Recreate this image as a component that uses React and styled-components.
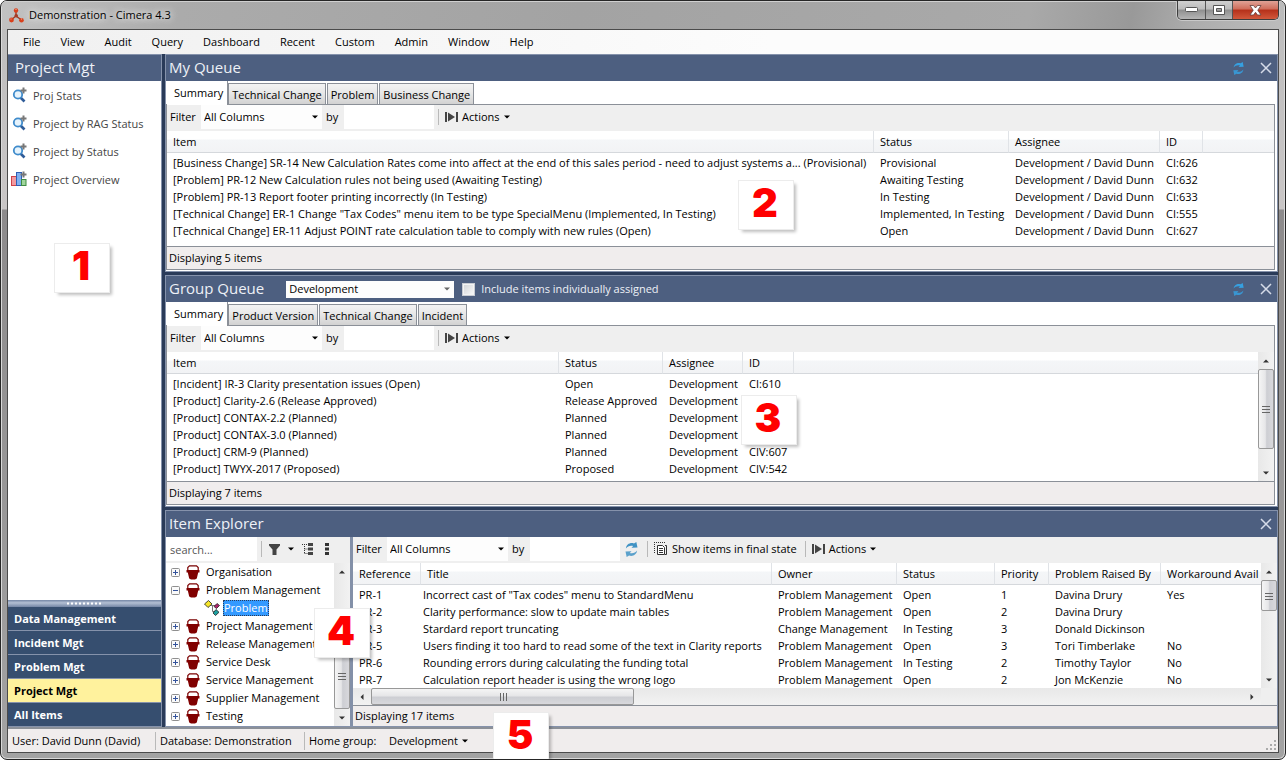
import React, { useState } from 'react';
import styled, { createGlobalStyle, css } from 'styled-components';

const color = {
  header: '#4d5f80',
  navy: '#2a3b59',
  nav: '#364e6f',
  active: '#fff29d',
  edge: '#8592ab',
  frame: '#8b9098',
  bar: '#efefef',
  status: '#f0eded',
  line: '#d5d8dc',
};

const GlobalStyle = createGlobalStyle`
  * { box-sizing: border-box; }
  body {
    margin: 0;
    background: #fff;
    color: #000;
    font: 11px/16px 'Open Sans', 'Noto Sans', sans-serif;
    overflow: hidden;
  }
  button, input, select { font: inherit; color: inherit; margin: 0; padding: 0; border: 0; background: none; border-radius: 0; }
  svg { display: block; flex: none; }
`;

const Window = styled.div`
  height: 100vh;
  display: flex;
  flex-direction: column;
  padding: 0 6px 6px;
  border: 1px solid #262626;
  border-radius: 7px;
  box-shadow: inset 0 0 0 1px #d9d9d9;
  background: linear-gradient(#bdbdbd 0, #c9c6c6 208px, #8d8b8c 209px, #a3a3a3 100%);
  overflow: hidden;
`;

const TitleBar = styled.header`
  flex: none;
  height: 28px;
  margin: 0 -5px;
  padding: 0 5px 0 7px;
  display: flex;
  align-items: center;
  gap: 5px;
  box-shadow: inset 0 1px 0 #d0d0d0;
  background: linear-gradient(100deg, #c2c2c2 0%, #ababab 14%, #a3a3a3 45%, #a9a9a9 80%, #999 88%, #adadad 93%, #bcbcbc 100%);
`;

const Title = styled.h1`
  flex: 1;
  margin: 0;
  font-size: 11px;
  font-weight: 400;
  color: #000;
  text-shadow: 0 0 6px #fff, 0 0 10px #e8e8e8;
`;

const WindowButtons = styled.div`
  align-self: flex-start;
  display: flex;
  height: 19px;
  border: 1px solid #3d3d3d;
  border-top: 0;
  border-radius: 0 0 5px 5px;
  overflow: hidden;
  box-shadow: 0 0 0 1px #c9c9c9;
`;

const WindowButton = styled.button`
  width: ${p => (p.$close ? 46 : 27)}px;
  display: grid;
  place-items: center;
  border-left: ${p => (p.$first ? 0 : '1px solid #555')};
  background: ${p => (p.$close
    ? 'linear-gradient(#e0a296 0, #cf6d5a 45%, #b5301a 50%, #d2583b 100%)'
    : 'linear-gradient(#d0d0d0 0, #bbb 45%, #8f8f8f 50%, #b5b5b5 100%)')};
`;

const Client = styled.div`
  flex: 1;
  min-height: 0;
  display: flex;
  flex-direction: column;
  border: 1px solid #4b4b4b;
`;

const MenuBar = styled.nav`
  flex: none;
  height: 24px;
  display: flex;
  align-items: center;
  gap: 20px;
  padding: 0 15px;
  background: linear-gradient(90deg, #f0f0f0, #fcfcfc 60%);
`;

const MenuItem = styled.button`
  font-size: 11px;
  line-height: 16px;
`;

const Workspace = styled.div`
  flex: 1;
  min-height: 0;
  display: flex;
  gap: 3px;
  background: ${color.navy};
`;

const Sidebar = styled.aside`
  position: relative;
  flex: none;
  width: 154px;
  display: flex;
  flex-direction: column;
  border-top: 1px solid ${color.edge};
  border-right: 1px solid ${color.edge};
  background: #fff;
`;

const PanelHeader = styled.div`
  flex: none;
  height: 26px;
  display: flex;
  align-items: center;
  padding: 0 5px 0 ${p => (p.$indent ? 7 : 3)}px;
  background: ${color.header};
  color: #eef1f7;
`;

const PanelTitle = styled.h2`
  margin: 0;
  padding-bottom: 2px;
  font-size: 15px;
  line-height: 24px;
  font-weight: 400;
`;

const Shortcuts = styled.ul`
  flex: 1;
  margin: 0;
  padding: 1px 0;
  list-style: none;
`;

const Shortcut = styled.a`
  display: flex;
  align-items: center;
  gap: 2px;
  height: 28px;
  padding-left: 3px;
  color: #444;
  text-decoration: none;
`;

const Splitter = styled.div`
  flex: none;
  height: 7px;
  display: grid;
  place-items: center;
  background: linear-gradient(#7486a5, #b3bfd3 40%, #7486a5);
`;

const Sections = styled.div`
  flex: none;
  display: flex;
  flex-direction: column;
`;

const SectionButton = styled.button`
  height: 24px;
  padding: 0 6px;
  text-align: left;
  font-weight: 700;
  border-bottom: 1px solid ${color.edge};
  background: ${p => (p.$active ? color.active : color.nav)};
  color: ${p => (p.$active ? '#000' : '#fff')};
`;

const Main = styled.main`
  flex: 1;
  min-width: 0;
  display: flex;
  flex-direction: column;
  gap: 3px;
`;

const Panel = styled.section`
  position: relative;
  min-height: 0;
  flex: ${p => (p.$grow ? '1' : 'none')};
  display: flex;
  flex-direction: column;
  border: 1px solid ${color.edge};
  background: #fff;
`;

const HeaderTools = styled.div`
  margin-left: auto;
  display: flex;
  align-items: center;
  gap: 15px;
`;

const IconButton = styled.button`
  display: grid;
  place-items: center;
`;

const Tabs = styled.div`
  height: 23px;
  display: flex;
  align-items: flex-end;
  gap: 1px;
  padding-left: 1px;
`;

const Tab = styled.button`
  height: 21px;
  padding: 2px 3px 0;
  border: 1px solid ${color.frame};
  border-bottom: 0;
  background: linear-gradient(#f3f3f3, #e8e8e8 45%, #d2d2d2);
  ${p => p.$active && css`
    height: 24px;
    margin: 0 -1px -1px 0;
    padding: 0 4px 0 7px;
    border-width: 0 1px 0 0;
    background: #fff;
    z-index: 1;
  `}
`;

const Frame = styled.div`
  display: flex;
  flex-direction: column;
  margin: 0 2px 1px 0;
  border: 1px solid ${color.frame};
`;

const Toolbar = styled.div`
  flex: none;
  height: 26px;
  display: flex;
  align-items: center;
  padding: 0 0 2px ${p => (p.$flush ? 0 : 3)}px;
  background: ${color.bar};
  white-space: nowrap;
`;

const FilterLabel = styled.label`
  width: ${p => (p.$by ? 22 : 31)}px;
  padding-left: ${p => (p.$by ? 4 : 0)}px;
`;

const SelectBox = styled.span`
  position: relative;
  display: flex;
  align-items: center;
  width: ${p => p.$width}px;
  height: ${p => p.$height}px;
  color: #000;
  background: #fdfdfd;

  select {
    appearance: none;
    width: 100%;
    height: 100%;
    padding-left: 3px;
    outline: 0;
  }

  svg {
    position: absolute;
    right: 4px;
    pointer-events: none;
  }
`;

const TextBox = styled.input`
  width: ${p => p.$width}px;
  height: 24px;
  background: #fff;
  outline: 0;
  padding: 0 4px;

  &::placeholder { color: #555; opacity: 1; }
`;

const Divider = styled.span`
  width: 1px;
  height: 16px;
  margin: 0 6px 0 4px;
  background: #b9b9b9;
`;

const ToolButton = styled.button`
  display: flex;
  align-items: center;
  gap: 4px;
`;

const FilterButton = styled(ToolButton)`
  gap: 8px;
  margin-left: 1px;
`;

const FinalStateButton = styled(ToolButton)`
  margin-right: 4px;
`;

const TreeTools = styled.div`
  display: flex;
  align-items: center;
  gap: 12px;
  margin-left: 8px;
`;

const RefreshButton = styled(IconButton)`
  margin: 0 4px;
`;

const TableArea = styled.div`
  height: ${p => (p.$height ? `${p.$height}px` : 'auto')};
  flex: ${p => (p.$height ? 'none' : '1')};
  min-height: 0;
  display: flex;
  background: #fff;
`;

const TableClip = styled.div`
  flex: 1;
  min-width: 0;
  overflow: hidden;
`;

const Table = styled.table`
  width: 100%;
  table-layout: fixed;
  border-spacing: 0;
  color: #000;

  th, td {
    padding: 0 0 0 6px;
    text-align: left;
    font-weight: 400;
    white-space: nowrap;
    overflow: hidden;
  }

  th {
    height: 22px;
    border-right: 1px solid #e0e3e7;
    border-bottom: 1px solid ${color.line};
    background: linear-gradient(#fff 8px, #f4f6f8 9px, #f2f3f5);
  }

  th:last-child { border-right: 0; }

  td { height: 17px; line-height: 17px; }

  ${p => p.$titled && css`
    td:nth-child(2) { padding-left: 2px; }
  `}

  tbody::before {
    content: '';
    display: block;
    height: 1px;
  }
`;

const ColumnWidth = styled.col`
  width: ${p => (p.$width ? `${p.$width}px` : 'auto')};
`;

const CountBar = styled.div`
  flex: none;
  height: ${p => (p.$short ? 21 : 23)}px;
  display: flex;
  align-items: center;
  padding-left: 2px;
  border-top: 1px solid ${color.frame};
  background: ${color.status};
`;

const ScrollTrack = styled.div`
  flex: none;
  display: flex;
  flex-direction: ${p => (p.$across ? 'row' : 'column')};
  width: ${p => (p.$across ? 'auto' : '16px')};
  height: ${p => (p.$across ? '17px' : 'auto')};
  margin-right: ${p => (p.$across ? 16 : 0)}px;
  background: linear-gradient(${p => (p.$across ? '180deg' : '90deg')}, #e8e8e8, #f2f2f2);
`;

const ScrollArrow = styled.button`
  flex: none;
  width: ${p => (p.$across ? 18 : 16)}px;
  height: 17px;
  display: grid;
  place-items: center;
`;

const ScrollSpace = styled.div`
  flex: ${p => p.$grow} 1 0;
`;

const ScrollThumb = styled.div`
  flex: ${p => p.$grow} 1 0;
  display: grid;
  place-items: center;
  border: 1px solid #989898;
  border-radius: 2px;
  background: linear-gradient(${p => (p.$across ? '180deg' : '90deg')}, #f5f5f5, #e6e6e8 45%, #cdced3 55%, #d8d8dc);
`;

const GroupSelect = styled.div`
  margin: 0 8px 0 22px;
`;

const CheckLabel = styled.label`
  display: flex;
  align-items: center;
  gap: 6px;

  input {
    appearance: none;
    width: 13px;
    height: 13px;
    border: 1px solid #c8ccd3;
    background: linear-gradient(135deg, #cfd2d6, #fafafa);
    box-shadow: inset 0 0 0 1px #f3f3f3;
  }

  input:checked { background: #3399ff; }
`;

const Explorer = styled.div`
  flex: 1;
  min-height: 0;
  display: flex;
`;

const TreePane = styled.div`
  flex: none;
  width: 187px;
  display: flex;
  flex-direction: column;
  border-right: 3px solid #8390a8;
`;

const TreeArea = styled.div`
  flex: 1;
  min-height: 0;
  display: flex;
`;

const Tree = styled.ul`
  flex: 1;
  min-width: 0;
  margin: 0;
  padding: 0;
  list-style: none;
  overflow: hidden;
`;

const TreeRow = styled.li`
  height: 18px;
  display: flex;
  align-items: center;
  padding-left: ${p => (p.$nested ? 38 : 5)}px;
  gap: ${p => (p.$nested ? 3 : 6)}px;
  white-space: nowrap;
`;

const TreeText = styled.span`
  line-height: 16px;
  ${p => p.$selected && css`
    padding: 0 1px;
    color: #fff;
    background: #3399ff;
    outline: 1px dotted #2a3b59;
    outline-offset: -1px;
  `}
`;

const Results = styled.div`
  flex: 1;
  min-width: 0;
  display: flex;
  flex-direction: column;
  background: ${color.bar};
`;

const StatusBar = styled.footer`
  position: relative;
  flex: none;
  height: 25px;
  display: flex;
  align-items: center;
  padding-left: 4px;
  border-top: 2px solid ${color.frame};
  background: ${color.status};
`;

const StatusText = styled.span`
  width: ${p => p.$width}px;
  white-space: nowrap;
`;

const StatusDivider = styled(Divider)`
  height: 18px;
  margin: 0 4px 0 0;
`;

const Grip = styled.span`
  margin-left: auto;
  align-self: flex-end;
`;

const Callout = styled.div`
  position: absolute;
  z-index: 5;
  left: ${p => p.$x}px;
  top: ${p => p.$y}px;
  width: 54px;
  height: 48px;
  display: grid;
  place-items: center;
  padding: 0 2px 4px 0;
  background: #fff;
  box-shadow: 0 0 0 1px #ececec, 3px 3px 3px rgba(0, 0, 0, 0.25);
  color: #f00;
  font: 900 40px/40px Inter, 'Liberation Sans', sans-serif;
`;

const Logo = () => (
  <svg width="15" height="15" viewBox="0 0 15 15">
    <path d="M7 3v5L2 12M7 8l5.500 4" fill="none" stroke="#9c3a22" strokeWidth="1.400" />
    <circle cx="7" cy="2.500" r="2.200" fill="#d8401c" />
    <circle cx="7.200" cy="7.800" r="1.800" fill="#a83a24" />
    <circle cx="2.500" cy="12" r="2.400" fill="#d8401c" />
    <circle cx="12.500" cy="12.200" r="2.300" fill="#d8401c" />
    <path d="M6.500 1.500h1M1.500 11h1M12 11h1" stroke="#f6b19c" />
  </svg>
);

const SearchPlus = () => (
  <svg width="20" height="18" viewBox="0 0 20 18">
    <path d="M9.500 10.500l4 4" stroke="#2f5c98" strokeWidth="2.600" />
    <circle cx="7" cy="7.500" r="4.200" fill="#e6f3fc" stroke="#3f8bcb" strokeWidth="1.800" />
    <path d="M12.500 .5v6M9.500 3.500h6" stroke="#777" strokeWidth="2" />
  </svg>
);

const ChartPlus = () => (
  <svg width="20" height="18" viewBox="0 0 20 18">
    <rect x="0.500" y="5.500" width="5" height="9" fill="#f29a9f" stroke="#cf4247" />
    <rect x="5.500" y="1.500" width="5" height="13" fill="#7fb0f0" stroke="#2f5fb4" />
    <rect x="10.500" y="8.500" width="4.500" height="6" fill="#9fd59c" stroke="#3f8b43" />
    <path d="M12.500 .5v6M9.500 3.500h6" stroke="#777" strokeWidth="2" />
  </svg>
);

const Refresh = ({ size = 13, fill = '#36a0e0' }) => (
  <svg width={size} height={size} viewBox="0 0 14 14" fill={fill}>
    <path d="M1.800 6C2 2.500 5.500 .2 9.300 1.300L11.500 0 12.600 5.200 7 5.400 8.600 3.800C6 3 3.500 3.800 1.800 6z" />
    <path d="M12.200 8C12 11.500 8.500 13.800 4.700 12.700L2.500 14 1.400 8.800 7 8.600 5.400 10.200C8 11 10.500 10.200 12.200 8z" opacity="0.85" />
  </svg>
);

const Cross = () => (
  <svg width="12" height="12" viewBox="0 0 12 12">
    <path d="M1 1l10 10M11 1L1 11" stroke="#d5dbe8" strokeWidth="1.500" />
  </svg>
);

const Arrow = ({ turn = 0, tone = '#000', size = 6 }) => (
  <svg width={size} height={size} viewBox="0 0 6 6">
    <path d="M0 1.500h6L3 4.500z" fill={tone} transform={`rotate(${turn} 3 3)`} />
  </svg>
);

const ActionIcon = () => (
  <svg width="13" height="10" viewBox="0 0 13 10">
    <path d="M0 0h2v10H0zM11 0h2v10h-2z" fill="#444" />
    <path d="M3 .5L10 5 3 9.500z" fill="#444" />
  </svg>
);

const FinalState = () => (
  <svg width="14" height="14" viewBox="0 0 14 14" fill="none" stroke="#333">
    <path d="M0 .5h11M.5 0v11" strokeDasharray="1 1" />
    <path d="M3.500 3.500h5l2 2v7h-7z" fill="#fff" />
    <path d="M5 6.500h4M5 8.500h4M5 10.500h4M11 3.500h1.500v9H11" />
  </svg>
);

const Funnel = () => (
  <svg width="11" height="11" viewBox="0 0 11 11">
    <path d="M0 0h11v1.500L7.500 5.500V11H3.500V5.500L0 1.500z" fill="#444" />
  </svg>
);

const TreeIcon = () => (
  <svg width="11" height="12" viewBox="0 0 11 12">
    <path d="M0 1.500h6M2.500 1v9.500M2.500 6H6M2.500 10.500H6" fill="none" stroke="#333" strokeDasharray="1 1" />
    <path d="M6 0h5v3H6zM6 4.500h5v3H6zM6 9h5v3H6z" fill="#444" />
  </svg>
);

const Dots = () => (
  <svg width="4" height="12" viewBox="0 0 4 12">
    <path d="M0 0h4v3H0zM0 4.500h4v3H0zM0 9h4v3H0z" fill="#333" />
  </svg>
);

const Bucket = () => (
  <svg width="14" height="15" viewBox="0 0 14 15">
    <path d="M1.800 6V2.500L3.500 .8h7l1.700 1.700V6" fill="#fff" stroke="#7a0000" strokeWidth="1.200" />
    <path d="M.500 5h13v2.500h-1.300L10.800 13.500 9 14.500H5L3.200 13.500 1.800 7.500H.5z" fill="#800000" />
  </svg>
);

const Expander = ({ open }) => (
  <svg width="9" height="9" viewBox="0 0 9 9">
    <rect x="0.500" y="0.500" width="8" height="8" rx="1" fill="#fafafa" stroke="#8f8f8f" />
    <path d={open ? 'M2 4.500h5' : 'M2 4.500h5M4.500 2v5'} stroke="#34539c" />
  </svg>
);

const NodeIcon = () => (
  <svg width="16" height="16" viewBox="0 0 16 16">
    <path d="M6 5.500h6M8.500 5.500v6h3" fill="none" stroke="#777" />
    <path d="M4.500 .5L8 4 4 7.500 .5 4z" fill="#f5e52a" stroke="#222" strokeWidth="0.800" />
    <path d="M13 3.500l2.500 2-3 3-2.500-2z" fill="#b0226c" stroke="#222" strokeWidth="0.800" />
    <path d="M12 9.500l3 2.800L11.500 15.500l-2.500-2.500z" fill="#1ca0a0" stroke="#222" strokeWidth="0.800" />
  </svg>
);

const Ridges = ({ across }) => (
  <svg width="8" height="8" viewBox="0 0 8 8">
    <path
      d={across ? 'M1.500 0v8M4.500 0v8M7.500 0v8' : 'M0 1.500h8M0 4.500h8M0 7.500h8'}
      stroke="#666"
    />
  </svg>
);

const GripDots = () => (
  <svg width="12" height="12" viewBox="0 0 12 12" fill="#aaa">
    <path d="M8 0h2v2H8zM4 4h2v2H4zM8 4h2v2H8zM0 8h2v2H0zM4 8h2v2H4zM8 8h2v2H8z" />
  </svg>
);

const SplitterDots = () => (
  <svg width="36" height="3" viewBox="0 0 36 3">
    <path d="M0 1.500h36" stroke="#fff" strokeWidth="2" strokeDasharray="2 2" />
  </svg>
);

const Scrollbar = ({ across, before, thumb, after }) => (
  <ScrollTrack $across={across}>
    <ScrollArrow $across={across} aria-label={across ? 'Scroll left' : 'Scroll up'}>
      <Arrow turn={across ? 90 : 180} tone="#333" />
    </ScrollArrow>
    <ScrollSpace $grow={before} />
    <ScrollThumb $across={across} $grow={thumb}><Ridges across={across} /></ScrollThumb>
    <ScrollSpace $grow={after} />
    <ScrollArrow $across={across} aria-label={across ? 'Scroll right' : 'Scroll down'}>
      <Arrow turn={across ? -90 : 0} tone="#333" />
    </ScrollArrow>
  </ScrollTrack>
);

const Grid = ({ columns, rows, titled }) => (
  <TableClip>
    <Table $titled={titled}>
      <colgroup>
        {columns.map(([name, width]) => <ColumnWidth key={name} $width={width} />)}
      </colgroup>
      <thead>
        <tr>{columns.map(([name]) => <th key={name} scope="col">{name}</th>)}</tr>
      </thead>
      <tbody>
        {rows.map(row => (
          <tr key={row[0]}>
            {columns.map(([name], i) => <td key={name}>{row[i]}</td>)}
          </tr>
        ))}
      </tbody>
    </Table>
  </TableClip>
);

const FilterBar = ({ id, extra }) => (
  <Toolbar>
    <FilterLabel htmlFor={`${id}-column`}>Filter</FilterLabel>
    <SelectBox $width={121} $height={24}>
      <select id={`${id}-column`}><option>All Columns</option></select>
      <Arrow />
    </SelectBox>
    <FilterLabel $by htmlFor={`${id}-text`}>by</FilterLabel>
    <TextBox id={`${id}-text`} $width={90} />
    {extra}
    <Divider />
    <ToolButton><ActionIcon />Actions<Arrow /></ToolButton>
  </Toolbar>
);

const TabStrip = ({ names }) => {
  const [current, setCurrent] = useState(names[0]);
  return (
    <Tabs role="tablist">
      {names.map(name => (
        <Tab
          key={name}
          role="tab"
          aria-selected={name === current}
          $active={name === current}
          onClick={() => setCurrent(name)}
        >
          {name}
        </Tab>
      ))}
    </Tabs>
  );
};

const menus = ['File', 'View', 'Audit', 'Query', 'Dashboard', 'Recent', 'Custom', 'Admin', 'Window', 'Help'];
const shortcuts = ['Proj Stats', 'Project by RAG Status', 'Project by Status', 'Project Overview'];
const sections = ['Data Management', 'Incident Mgt', 'Problem Mgt', 'Project Mgt', 'All Items'];

const myColumns = [['Item', 707], ['Status', 135], ['Assignee', 151], ['ID', 43], ['']];
const myRows = [
  ['[Business Change] SR-14 New Calculation Rates come into affect at the end of this sales period - need to adjust systems a... (Provisional)', 'Provisional', 'Development / David Dunn', 'CI:626'],
  ['[Problem] PR-12 New Calculation rules not being used (Awaiting Testing)', 'Awaiting Testing', 'Development / David Dunn', 'CI:632'],
  ['[Problem] PR-13 Report footer printing incorrectly (In Testing)', 'In Testing', 'Development / David Dunn', 'CI:633'],
  ['[Technical Change] ER-1 Change "Tax Codes" menu item to be type SpecialMenu (Implemented, In Testing)', 'Implemented, In Testing', 'Development / David Dunn', 'CI:555'],
  ['[Technical Change] ER-11 Adjust POINT rate calculation table to comply with new rules (Open)', 'Open', 'Development / David Dunn', 'CI:627'],
];

const groupColumns = [['Item', 392], ['Status', 104], ['Assignee', 80], ['ID', 51], ['']];
const groupRows = [
  ['[Incident] IR-3 Clarity presentation issues (Open)', 'Open', 'Development', 'CI:610'],
  ['[Product] Clarity-2.6 (Release Approved)', 'Release Approved', 'Development', ''],
  ['[Product] CONTAX-2.2 (Planned)', 'Planned', 'Development', ''],
  ['[Product] CONTAX-3.0 (Planned)', 'Planned', 'Development', ''],
  ['[Product] CRM-9 (Planned)', 'Planned', 'Development', 'CIV:607'],
  ['[Product] TWYX-2017 (Proposed)', 'Proposed', 'Development', 'CIV:542'],
];

const problemColumns = [['Reference', 68], ['Title', 351], ['Owner', 125], ['Status', 98], ['Priority', 54], ['Problem Raised By', 112], ['Workaround Avail']];
const problemRows = [
  ['PR-1', 'Incorrect cast of "Tax codes" menu to StandardMenu', 'Problem Management', 'Open', '1', 'Davina Drury', 'Yes'],
  ['PR-2', 'Clarity performance: slow to update main tables', 'Problem Management', 'Open', '2', 'Davina Drury', ''],
  ['PR-3', 'Stardard report truncating', 'Change Management', 'In Testing', '3', 'Donald Dickinson', ''],
  ['PR-5', 'Users finding it too hard to read some of the text in Clarity reports', 'Problem Management', 'Open', '3', 'Tori Timberlake', 'No'],
  ['PR-6', 'Rounding errors during calculating the funding total', 'Problem Management', 'In Testing', '2', 'Timothy Taylor', 'No'],
  ['PR-7', 'Calculation report header is using the wrong logo', 'Problem Management', 'Open', '2', 'Jon McKenzie', 'No'],
];

const treeBefore = ['Organisation', 'Problem Management'];
const treeAfter = ['Project Management', 'Release Management', 'Service Desk', 'Service Management', 'Supplier Management', 'Testing'];

const Folder = ({ name, open }) => (
  <TreeRow>
    <Expander open={open} />
    <Bucket />
    <TreeText>{name}</TreeText>
  </TreeRow>
);

const App = () => {
  const [section, setSection] = useState('Project Mgt');

  return (
    <Window>
      <GlobalStyle />
      <TitleBar>
        <Logo />
        <Title>Demonstration - Cimera 4.3</Title>
        <WindowButtons>
          <WindowButton $first aria-label="Minimize">
            <svg width="13" height="6" viewBox="0 0 13 6"><rect x="0.500" y="0.500" width="12" height="4" rx="1" fill="#fff" stroke="#555" /></svg>
          </WindowButton>
          <WindowButton aria-label="Maximize">
            <svg width="13" height="11" viewBox="0 0 13 11"><path d="M.5.5h11v9H.5zM3.500 3.500v3h5v-3z" fill="#fff" stroke="#555" fillRule="evenodd" /></svg>
          </WindowButton>
          <WindowButton $close aria-label="Close">
            <svg width="13" height="11" viewBox="0 0 13 11"><path d="M1 .5h3.500l2 2.500 2-2.500H12L8.800 5.200 12 10H8.500l-2-2.700-2 2.700H1l3.200-4.800z" fill="#fff" stroke="#64403c" strokeWidth="0.800" /></svg>
          </WindowButton>
        </WindowButtons>
      </TitleBar>

      <Client>
        <MenuBar>
          {menus.map(name => <MenuItem key={name}>{name}</MenuItem>)}
        </MenuBar>

        <Workspace>
          <Sidebar>
            <PanelHeader $indent><PanelTitle>Project Mgt</PanelTitle></PanelHeader>
            <Shortcuts>
              {shortcuts.map(name => (
                <li key={name}>
                  <Shortcut href="#">
                    {name === 'Project Overview' ? <ChartPlus /> : <SearchPlus />}
                    {name}
                  </Shortcut>
                </li>
              ))}
            </Shortcuts>
            <Splitter><SplitterDots /></Splitter>
            <Sections>
              {sections.map(name => (
                <SectionButton key={name} $active={name === section} onClick={() => setSection(name)}>
                  {name}
                </SectionButton>
              ))}
            </Sections>
            <Callout $x={47} $y={189}>1</Callout>
          </Sidebar>

          <Main>
            <Panel>
              <PanelHeader>
                <PanelTitle>My Queue</PanelTitle>
                <HeaderTools>
                  <IconButton aria-label="Refresh"><Refresh /></IconButton>
                  <IconButton aria-label="Close"><Cross /></IconButton>
                </HeaderTools>
              </PanelHeader>
              <TabStrip names={['Summary', 'Technical Change', 'Problem', 'Business Change']} />
              <Frame>
                <FilterBar id="my" />
                <TableArea $height={115}>
                  <Grid columns={myColumns} rows={myRows} />
                </TableArea>
                <CountBar>Displaying 5 items</CountBar>
              </Frame>
              <Callout $x={573} $y={126}>2</Callout>
            </Panel>

            <Panel>
              <PanelHeader>
                <PanelTitle>Group Queue</PanelTitle>
                <GroupSelect>
                  <SelectBox $width={168} $height={17}>
                    <select aria-label="Group"><option>Development</option></select>
                    <Arrow tone="#666" />
                  </SelectBox>
                </GroupSelect>
                <CheckLabel><input type="checkbox" />Include items individually assigned</CheckLabel>
                <HeaderTools>
                  <IconButton aria-label="Refresh"><Refresh /></IconButton>
                  <IconButton aria-label="Close"><Cross /></IconButton>
                </HeaderTools>
              </PanelHeader>
              <TabStrip names={['Summary', 'Product Version', 'Technical Change', 'Incident']} />
              <Frame>
                <FilterBar id="group" />
                <TableArea $height={129}>
                  <Grid columns={groupColumns} rows={groupRows} />
                  <Scrollbar before={0} thumb={80} after={16} />
                </TableArea>
                <CountBar>Displaying 7 items</CountBar>
              </Frame>
              <Callout $x={576} $y={120}>3</Callout>
            </Panel>

            <Panel $grow>
              <PanelHeader>
                <PanelTitle>Item Explorer</PanelTitle>
                <HeaderTools>
                  <IconButton aria-label="Close"><Cross /></IconButton>
                </HeaderTools>
              </PanelHeader>
              <Explorer>
                <TreePane>
                  <Toolbar $flush>
                    <TextBox $width={91} placeholder="search..." aria-label="Search" />
                    <Divider />
                    <FilterButton aria-label="Filter"><Funnel /><Arrow /></FilterButton>
                    <TreeTools>
                      <IconButton aria-label="Expand tree"><TreeIcon /></IconButton>
                      <IconButton aria-label="More"><Dots /></IconButton>
                    </TreeTools>
                  </Toolbar>
                  <TreeArea>
                    <Tree>
                      {treeBefore.map(name => <Folder key={name} name={name} open={name === 'Problem Management'} />)}
                      <TreeRow $nested>
                        <NodeIcon />
                        <TreeText $selected>Problem</TreeText>
                      </TreeRow>
                      {treeAfter.map(name => <Folder key={name} name={name} />)}
                    </Tree>
                    <Scrollbar before={63} thumb={66} after={0} />
                  </TreeArea>
                </TreePane>
                <Results>
                  <FilterBar
                    id="explorer"
                    extra={(
                      <>
                        <RefreshButton aria-label="Refresh"><Refresh size={15} fill="#4193c4" /></RefreshButton>
                        <Divider />
                        <FinalStateButton><FinalState />Show items in final state</FinalStateButton>
                      </>
                    )}
                  />
                  <TableArea>
                    <Grid titled columns={problemColumns} rows={problemRows} />
                    <Scrollbar before={0} thumb={30} after={61} />
                  </TableArea>
                  <Scrollbar across before={0} thumb={262} after={610} />
                  <CountBar $short>Displaying 17 items</CountBar>
                </Results>
              </Explorer>
              <Callout $x={149} $y={98}>4</Callout>
            </Panel>
          </Main>
        </Workspace>

        <StatusBar>
          <StatusText $width={143}>User: David Dunn (David)</StatusText>
          <StatusDivider />
          <StatusText $width={144}>Database: Demonstration</StatusText>
          <StatusDivider />
          <StatusText $width={80}>Home group:</StatusText>
          <ToolButton>Development<Arrow /></ToolButton>
          <Grip><GripDots /></Grip>
          <Callout $x={486} $y={-16}>5</Callout>
        </StatusBar>
      </Client>
    </Window>
  );
};

export default App;
